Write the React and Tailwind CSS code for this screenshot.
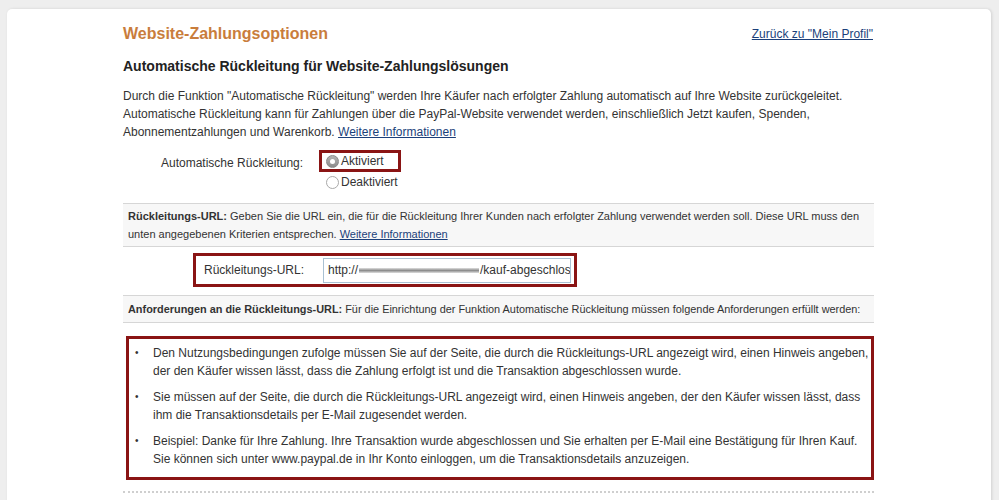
import React from 'react'

const Radio = ({ checked }) => (
  <span
    className={`inline-flex items-center justify-center w-[13px] h-[13px] rounded-full border ${
      checked ? 'border-[#8a8a8a] bg-gradient-to-b from-[#b5b5b5] to-[#8c8c8c]' : 'border-[#a9a9a9] bg-white'
    }`}
  >
    {checked && <span className="w-[5px] h-[5px] rounded-full bg-white" />}
  </span>
)

const bullets = [
  [
    'Den Nutzungsbedingungen zufolge müssen Sie auf der Seite, die durch die Rückleitungs-URL angezeigt wird, einen Hinweis angeben,',
    'der den Käufer wissen lässt, dass die Zahlung erfolgt ist und die Transaktion abgeschlossen wurde.',
  ],
  [
    'Sie müssen auf der Seite, die durch die Rückleitungs-URL angezeigt wird, einen Hinweis angeben, der den Käufer wissen lässt, dass',
    'ihm die Transaktionsdetails per E-Mail zugesendet werden.',
  ],
  [
    'Beispiel: Danke für Ihre Zahlung. Ihre Transaktion wurde abgeschlossen und Sie erhalten per E-Mail eine Bestätigung für Ihren Kauf.',
    'Sie können sich unter www.paypal.de in Ihr Konto einloggen, um die Transaktionsdetails anzuzeigen.',
  ],
]

export default function App() {
  return (
    <div className="w-[999px] h-[500px] overflow-hidden bg-[#eeeeee] pt-[9px] pl-[7px] font-['Liberation_Sans',Arial,sans-serif] text-[#333]">
      <div className="w-[984px] h-[520px] bg-white rounded-[5px] shadow-[1px_0_3px_rgba(0,0,0,0.12)] pl-[116px] pt-[15px]">
        <div className="w-[751px]">
          <div className="flex items-center justify-between h-[20px]">
            <h1 className="text-[16px] font-bold text-[#c97d3c]">Website-Zahlungsoptionen</h1>
            <a href="#" className="text-[12px] text-[#1b3f7a] underline mr-[1px]">Zurück zu "Mein Profil"</a>
          </div>

          <h2 className="mt-[12px] text-[14px] font-bold text-[#222] leading-[20px]">
            Automatische Rückleitung für Website-Zahlungslösungen
          </h2>

          <p className="mt-[11px] text-[12px] leading-[18px] whitespace-nowrap">
            Durch die Funktion "Automatische Rückleitung" werden Ihre Käufer nach erfolgter Zahlung automatisch auf Ihre Website zurückgeleitet.
            <br />
            Automatische Rückleitung kann für Zahlungen über die PayPal-Website verwendet werden, einschließlich Jetzt kaufen, Spenden,
            <br />
            Abonnementzahlungen und Warenkorb.{' '}
            <a href="#" className="text-[#1b3f7a] underline">Weitere Informationen</a>
          </p>

          <div className="flex mt-[9px] text-[12px]">
            <div className="w-[196px] pl-[38px] pt-[4px]">Automatische Rückleitung:</div>
            <div className="flex flex-col">
              <div className="flex items-center gap-[2px] border-[3px] border-[#8a1414] w-[82px] h-[22px] pl-[4px]">
                <Radio checked />
                <span>Aktiviert</span>
              </div>
              <div className="flex items-center gap-[2px] pl-[7px] h-[20px]">
                <Radio />
                <span>Deaktiviert</span>
              </div>
            </div>
          </div>

          <div className="mt-[11px] border-y border-[#d6d6d6] bg-[#f7f7f7] px-[5px] py-[3px] text-[11px] leading-[18px] whitespace-nowrap">
            <b>Rückleitungs-URL:</b> Geben Sie die URL ein, die für die Rückleitung Ihrer Kunden nach erfolgter Zahlung verwendet werden soll. Diese URL muss den
            <br />
            unten angegebenen Kriterien entsprechen.{' '}
            <a href="#" className="text-[#1b3f7a] underline">Weitere Informationen</a>
          </div>

          <div className="pt-[6px] pb-[8px] pl-[70px]">
            <div className="flex items-center w-[384px] h-[34px] border-[3px] border-[#8a1414] pl-[8px] text-[12px]">
              <span className="w-[119px]">Rückleitungs-URL:</span>
              <div className="flex items-center w-[248px] h-[25px] border border-[#a9c1d3] px-[4px] overflow-hidden whitespace-nowrap">
                <span>http://</span>
                <span className="w-[120px] shrink-0 h-[5px] mx-[1px] bg-gradient-to-b from-[#e0e0e0] via-[#8d8d8d] to-[#e0e0e0] blur-[0.6px]" />
                <span>/kauf-abgeschlos</span>
              </div>
            </div>
          </div>

          <div className="border-y border-[#d6d6d6] bg-[#f7f7f7] px-[5px] h-[28px] flex items-center text-[10.9px] whitespace-nowrap">
            <span>
              <b>Anforderungen an die Rückleitungs-URL:</b> Für die Einrichtung der Funktion Automatische Rückleitung müssen folgende Anforderungen erfüllt werden:
            </span>
          </div>

          <ul className="mt-[13px] ml-[3px] border-[3px] border-[#8a1414] pt-[5px] pb-[9px] pl-[6px] text-[12px] leading-[18px] whitespace-nowrap">
            {bullets.map((b, i) => (
              <li key={i} className={`flex ${i > 0 ? 'mt-[8px]' : ''}`}>
                <span className="w-[18px] shrink-0 text-[10px]">•</span>
                <span>
                  {b[0]}
                  <br />
                  {b[1]}
                </span>
              </li>
            ))}
          </ul>

          <div className="mt-[11px] border-t-2 border-dotted border-[#cfcfcf]" />
        </div>
      </div>
    </div>
  )
}
